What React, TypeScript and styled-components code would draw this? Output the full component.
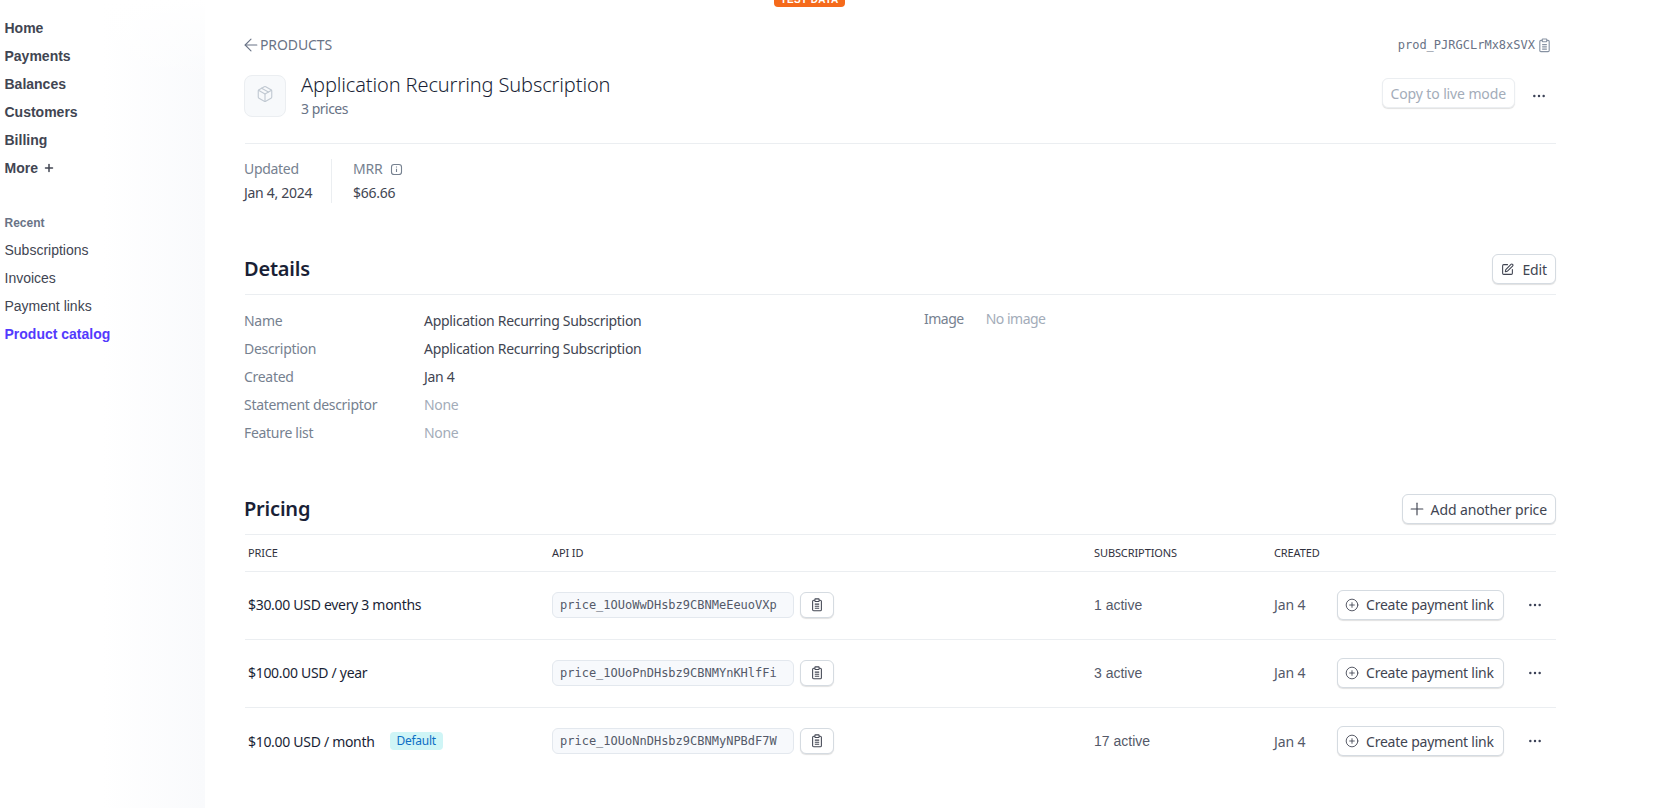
import React from 'react';
import styled, { createGlobalStyle } from 'styled-components';
import { ArrowLeft, CirclePlus, Ellipsis, Package, Plus, SquarePen } from 'lucide-react';

const GlobalStyle = createGlobalStyle`
  html,
  body {
    background: #fff;
    height: 100%;
    margin: 0;
    overflow: hidden;
  }

  * {
    box-sizing: border-box;
  }
`;

const UI_FONT = `'Noto Sans', 'Open Sans', sans-serif`;
const NAV_FONT = `'Liberation Sans', Arial, sans-serif`;
const MONO_FONT = `'DejaVu Sans Mono', 'Liberation Mono', monospace`;

const Page = styled.div`
  color: #1a1f36;
  display: flex;
  font-family: ${UI_FONT};
  height: 808px;
  letter-spacing: -0.3px;
  position: relative;
  width: 1678px;
`;

const Banner = styled.div`
  background: #f56a1b;
  border-radius: 0 0 4px 4px;
  color: #fff;
  font-family: ${NAV_FONT};
  font-size: 10px;
  font-weight: 700;
  height: 7px;
  left: 774px;
  letter-spacing: 0.4px;
  line-height: 0;
  overflow: hidden;
  position: absolute;
  text-align: center;
  top: 0;
  width: 71px;
`;

const Sidebar = styled.nav`
  background:
    linear-gradient(to bottom, #fff 0, rgba(255, 255, 255, 0) 80px),
    linear-gradient(to right, #fff 50%, #f9fafc 100%);
  display: flex;
  flex: 0 0 205px;
  flex-direction: column;
  font-family: ${NAV_FONT};
  font-size: 14px;
  letter-spacing: 0;
  padding: 14px 0 0 4.5px;
`;

const NavItem = styled.a<{ $weight?: number; $active?: boolean }>`
  align-items: center;
  color: ${(p) => (p.$active ? '#533afd' : '#414552')};
  display: flex;
  font-weight: ${(p) => p.$weight ?? 400};
  gap: 5px;
  height: 28px;
`;

const NavHeading = styled.div`
  align-items: center;
  color: #697386;
  display: flex;
  font-size: 12px;
  font-weight: 700;
  height: 27px;
  margin-top: 27px;
`;

const Main = styled.main`
  display: flex;
  flex: 0 0 1311px;
  flex-direction: column;
  margin-left: 40px;
  padding-top: 33px;
`;

const TopRow = styled.div`
  align-items: center;
  display: flex;
  height: 24px;
  justify-content: space-between;
`;

const BackLink = styled.a`
  align-items: center;
  color: #697386;
  display: flex;
  font-size: 14px;
  letter-spacing: -0.1px;
  margin-top: -1px;
`;

const BackArrow = styled(ArrowLeft)`
  margin: 0 -1px 0 -4px;
`;

const ProductId = styled.div`
  align-items: center;
  color: #697386;
  display: flex;
  font-family: ${MONO_FONT};
  font-size: 12px;
  gap: 2px;
  letter-spacing: 0;
  padding-right: 4px;

  svg {
    color: #8792a2;
  }
`;

const TitleRow = styled.header`
  align-items: flex-start;
  border-bottom: 1px solid #ebeef1;
  display: flex;
  height: 87px;
  justify-content: space-between;
  padding-top: 15px;
`;

const TitleGroup = styled.div`
  align-items: center;
  display: flex;
  gap: 15px;
`;

const ProductIcon = styled.div`
  align-items: center;
  background: #f7f9fb;
  border: 1px solid #ebeef1;
  border-radius: 8px;
  color: #c1c9d2;
  display: flex;
  height: 42px;
  justify-content: center;
  margin-left: -1px;
  padding-bottom: 3px;
  width: 42px;
`;

const Title = styled.h1`
  color: #1a1f36;
  font-size: 20px;
  font-weight: 300;
  letter-spacing: -0.12px;
  line-height: 26px;
  margin: 0;
`;

const Subtitle = styled.div`
  color: #697386;
  font-size: 14px;
  letter-spacing: -0.5px;
  line-height: 20px;
  margin-top: 1px;
`;

const TitleActions = styled.div`
  align-items: center;
  display: flex;
  gap: 16px;
  padding: 6px 9px 0 0;
`;

const Button = styled.button<{ $disabled?: boolean }>`
  align-items: center;
  background: #fff;
  border: 1px solid ${(p) => (p.$disabled ? '#ebeef1' : '#d5dbe1')};
  border-radius: 6px;
  box-shadow: 0 1px 1px rgba(0, 0, 0, 0.12);
  color: ${(p) => (p.$disabled ? '#a3acb9' : '#414552')};
  display: flex;
  flex: none;
  font-family: ${UI_FONT};
  font-size: 14px;
  gap: 8px;
  height: 30px;
  letter-spacing: -0.12px;
  padding: 0 8px;
  white-space: nowrap;
`;

const AddIcon = styled(Plus)`
  margin: 0 -4px 0 -4px;
`;

const PaymentLinkButton = styled(Button)`
  gap: 7px;
  letter-spacing: -0.22px;
  padding: 0 7px;
  width: 167px;
`;

const MoreButton = styled.span`
  align-items: center;
  color: #3c4257;
  display: flex;
  margin-top: 5px;
`;

const Stats = styled.div`
  display: flex;
  height: 44px;
  margin-top: 15px;
`;

const Stat = styled.div`
  border-left: 1px solid #ebeef1;
  display: flex;
  flex-direction: column;
  gap: 4px;
  padding: 0 20px 0 21px;

  &:first-child {
    border-left: 0;
    margin-left: -1px;
    padding-left: 0;
    padding-right: 19px;
  }
`;

const StatLabel = styled.div`
  align-items: center;
  color: #768190;
  display: flex;
  font-size: 14px;
  gap: 8px;
  line-height: 20px;
`;

const StatValue = styled.div`
  color: #414552;
  font-size: 14px;
  line-height: 20px;
`;

const SectionHead = styled.div<{ $top: number }>`
  align-items: flex-start;
  border-bottom: 1px solid #ebeef1;
  display: flex;
  height: 41px;
  justify-content: space-between;
  margin-top: ${(p) => p.$top}px;
`;

const SectionTitle = styled.h2`
  color: #1a1f36;
  font-size: 20px;
  font-weight: 600;
  letter-spacing: -0.2px;
  line-height: 30px;
  margin: 0 0 0 -1px;
`;

const DetailsGrid = styled.div`
  display: flex;
  padding-top: 11px;
`;

const DetailsList = styled.dl`
  display: grid;
  flex: 0 0 679px;
  grid-auto-rows: 28px;
  grid-template-columns: 180px 1fr;
  margin: 0 0 0 -1px;
`;

const Term = styled.dt`
  align-items: center;
  color: #768190;
  display: flex;
  font-size: 14px;
`;

const Value = styled.dd<{ $muted?: boolean }>`
  align-items: center;
  color: ${(p) => (p.$muted ? '#a3acb9' : '#414552')};
  display: flex;
  font-size: 14px;
  margin: 0;
`;

const ImageBlock = styled.div`
  align-items: center;
  display: flex;
  font-size: 14px;
  gap: 22px;
  height: 24px;
  letter-spacing: -0.5px;
  margin-left: 1px;
`;

const TableRow = styled.div<{ $head?: boolean }>`
  align-items: center;
  border-bottom: 1px solid #ebeef1;
  display: grid;
  grid-template-columns: 304px 542px 180px 63px 167px 1fr;
  height: ${(p) => (p.$head ? '37px' : '68px')};
  padding-bottom: ${(p) => (p.$head ? '1px' : '2px')};
  padding-left: 3px;

  &:last-child {
    border-bottom: 0;
  }
`;

const HeadCell = styled.div`
  color: #30313d;
  font-size: 11px;
  letter-spacing: -0.1px;
  text-transform: uppercase;
`;

const PriceCell = styled.div`
  align-items: center;
  color: #1a1f36;
  display: flex;
  font-size: 14px;
  gap: 15px;
`;

const Badge = styled.span`
  background: #cff5f6;
  border-radius: 4px;
  color: #0b6ec5;
  font-size: 12px;
  line-height: 18px;
  padding: 0 7px;
`;

const ApiCell = styled.div`
  align-items: center;
  display: flex;
  gap: 6px;
`;

const ApiId = styled.code`
  background: #f7f9fc;
  border: 1px solid #e3e8ee;
  border-radius: 6px;
  color: #545969;
  font-family: ${MONO_FONT};
  font-size: 12px;
  letter-spacing: 0;
  line-height: 24px;
  padding: 0 7px;
  width: 242px;
`;

const IconButton = styled(Button)`
  height: 26px;
  justify-content: center;
  padding: 0;
  width: 34px;
`;

const MutedCell = styled.div<{ $nav?: boolean }>`
  color: #545969;
  font-family: ${(p) => (p.$nav ? NAV_FONT : UI_FONT)};
  font-size: 14px;
  letter-spacing: ${(p) => (p.$nav ? '0' : '-0.1px')};
`;

const RowMore = styled.div`
  color: #3c4257;
  display: flex;
  padding-left: 23px;
`;

const ClipboardIcon: React.FC<{ size?: number }> = ({ size = 14 }) => (
  <svg width={size} height={size} viewBox="0 0 16 16" fill="none" stroke="currentColor" strokeWidth="1.2">
    <rect x="3" y="2.5" width="10" height="12" rx="1.2" />
    <rect x="5.6" y="1" width="4.8" height="3" rx="0.6" fill="#fff" />
    <path d="M5.5 7h5M5.5 9.4h5M5.5 11.8h5" />
  </svg>
);

const InfoIcon: React.FC = () => (
  <svg width={13} height={13} viewBox="0 0 13 13" fill="none" stroke="currentColor" strokeWidth="1.1">
    <rect x="1.5" y="1.5" width="10" height="10" rx="2.6" />
    <path d="M6.5 5.8v3.2M6.5 3.6v1" />
  </svg>
);

const prices = [
  { label: '$30.00 USD every 3 months', id: 'price_1OUoWwDHsbz9CBNMeEeuoVXp', active: '1 active' },
  { label: '$100.00 USD / year', id: 'price_1OUoPnDHsbz9CBNMYnKHlfFi', active: '3 active' },
  { label: '$10.00 USD / month', id: 'price_1OUoNnDHsbz9CBNMyNPBdF7W', active: '17 active', isDefault: true },
];

export default function App() {
  return (
    <Page>
      <GlobalStyle />
      <Banner>TEST DATA</Banner>
      <Sidebar>
        <NavItem $weight={700}>Home</NavItem>
        <NavItem $weight={700}>Payments</NavItem>
        <NavItem $weight={700}>Balances</NavItem>
        <NavItem $weight={700}>Customers</NavItem>
        <NavItem $weight={700}>Billing</NavItem>
        <NavItem $weight={700}>
          More <Plus size={12} strokeWidth={3} />
        </NavItem>
        <NavHeading>Recent</NavHeading>
        <NavItem>Subscriptions</NavItem>
        <NavItem>Invoices</NavItem>
        <NavItem>Payment links</NavItem>
        <NavItem $weight={700} $active>
          Product catalog
        </NavItem>
      </Sidebar>
      <Main>
        <TopRow>
          <BackLink>
            <BackArrow size={20} strokeWidth={1.3} />
            PRODUCTS
          </BackLink>
          <ProductId>
            prod_PJRGCLrMx8xSVX
            <ClipboardIcon size={15} />
          </ProductId>
        </TopRow>
        <TitleRow>
          <TitleGroup>
            <ProductIcon>
              <Package size={18} strokeWidth={1.5} />
            </ProductIcon>
            <div>
              <Title>Application Recurring Subscription</Title>
              <Subtitle>3 prices</Subtitle>
            </div>
          </TitleGroup>
          <TitleActions>
            <Button $disabled>Copy to live mode</Button>
            <MoreButton>
              <Ellipsis size={16} strokeWidth={1.7} />
            </MoreButton>
          </TitleActions>
        </TitleRow>
        <Stats>
          <Stat>
            <StatLabel>Updated</StatLabel>
            <StatValue>Jan 4, 2024</StatValue>
          </Stat>
          <Stat>
            <StatLabel>
              MRR <InfoIcon />
            </StatLabel>
            <StatValue>$66.66</StatValue>
          </Stat>
        </Stats>
        <SectionHead $top={51}>
          <SectionTitle>Details</SectionTitle>
          <Button>
            <SquarePen size={13} />
            Edit
          </Button>
        </SectionHead>
        <DetailsGrid>
          <DetailsList>
            <Term>Name</Term>
            <Value>Application Recurring Subscription</Value>
            <Term>Description</Term>
            <Value>Application Recurring Subscription</Value>
            <Term>Created</Term>
            <Value>Jan 4</Value>
            <Term>Statement descriptor</Term>
            <Value $muted>None</Value>
            <Term>Feature list</Term>
            <Value $muted>None</Value>
          </DetailsList>
          <ImageBlock>
            <Term>Image</Term>
            <Value $muted>No image</Value>
          </ImageBlock>
        </DetailsGrid>
        <SectionHead $top={48}>
          <SectionTitle>Pricing</SectionTitle>
          <Button>
            <AddIcon size={20} strokeWidth={1.4} />
            Add another price
          </Button>
        </SectionHead>
        <div>
          <TableRow $head>
            <HeadCell>Price</HeadCell>
            <HeadCell>API ID</HeadCell>
            <HeadCell>Subscriptions</HeadCell>
            <HeadCell>Created</HeadCell>
          </TableRow>
          {prices.map((price) => (
            <TableRow key={price.id}>
              <PriceCell>
                {price.label}
                {price.isDefault ? <Badge>Default</Badge> : null}
              </PriceCell>
              <ApiCell>
                <ApiId>{price.id}</ApiId>
                <IconButton>
                  <ClipboardIcon size={14} />
                </IconButton>
              </ApiCell>
              <MutedCell $nav>{price.active}</MutedCell>
              <MutedCell>Jan 4</MutedCell>
              <PaymentLinkButton>
                <CirclePlus size={14} strokeWidth={1.5} />
                Create payment link
              </PaymentLinkButton>
              <RowMore>
                <Ellipsis size={16} strokeWidth={1.7} />
              </RowMore>
            </TableRow>
          ))}
        </div>
      </Main>
    </Page>
  );
}
